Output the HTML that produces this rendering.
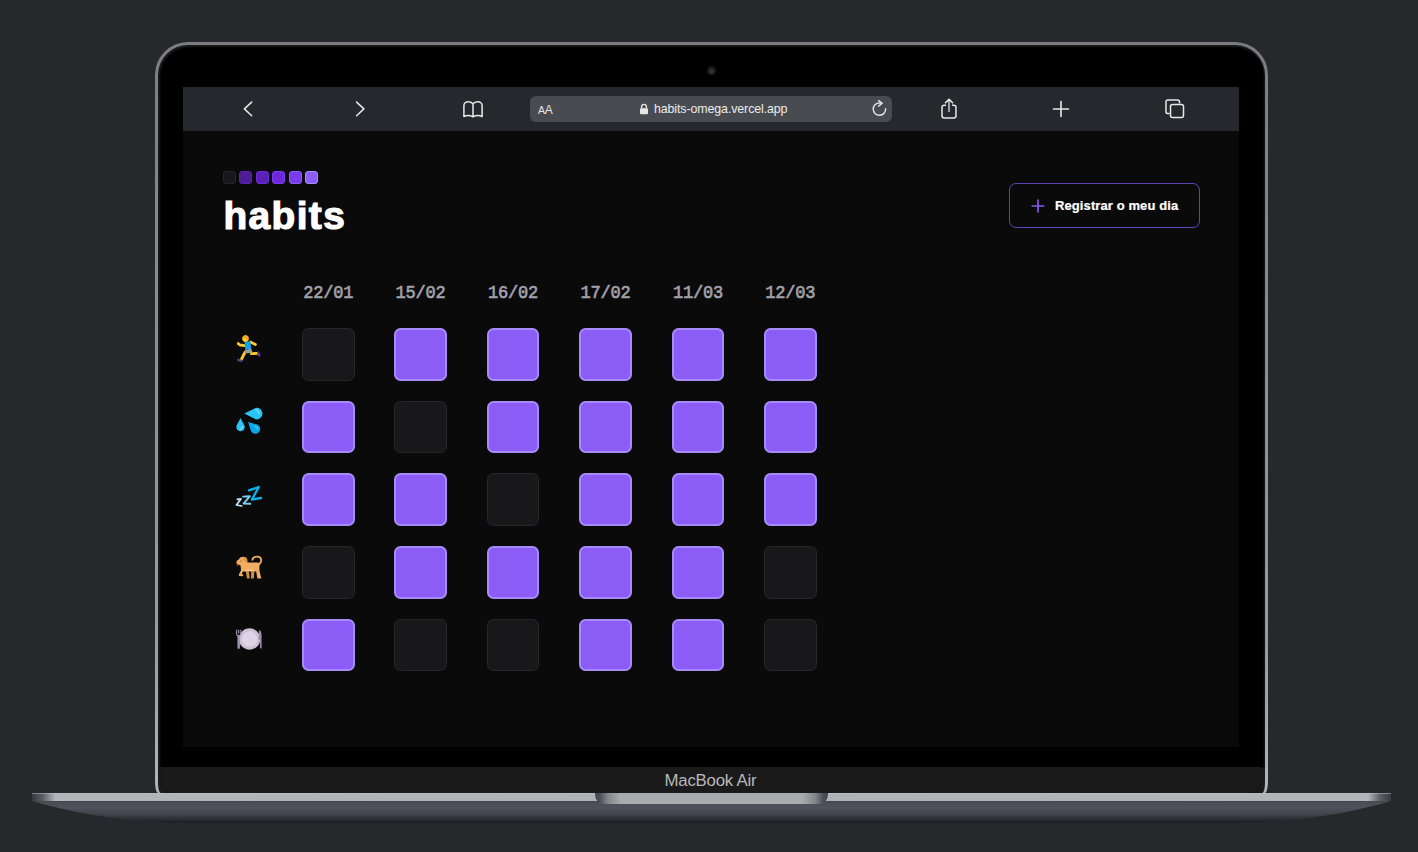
<!DOCTYPE html>
<html>
<head>
<meta charset="utf-8">
<style>
*{margin:0;padding:0;box-sizing:border-box}
html,body{width:1418px;height:852px;overflow:hidden;background:#25292c;font-family:"Liberation Sans",sans-serif}
.abs{position:absolute}
#lid{position:absolute;left:155px;top:42px;width:1113px;height:751px;border-radius:33px 33px 3px 3px / 33px 33px 12px 12px;background:linear-gradient(180deg,#7c7d82 0,#8d8e93 300px,#9a9b9f 600px,#b4b5b9 751px);}
#lid2{position:absolute;left:158px;top:45px;width:1107px;height:748px;border-radius:30px 30px 2.5px 2.5px / 30px 30px 11px 11px;background:#1b1b1c;}
#lid3{position:absolute;left:160.5px;top:47.5px;width:1102px;height:719.5px;border-radius:28px 28px 0 0;background:#000;box-shadow:0 0 2px 1px #000}
#chin{position:absolute;left:161px;top:767px;width:1100px;height:26px;background:#1a1a1a;border-radius:0 0 12px 12px;box-shadow:0 1px 1px #111}
#cam{position:absolute;left:707px;top:65.8px;width:9px;height:9px;border-radius:50%;background:radial-gradient(circle at 50% 60%,#3a3b40 0,#1e1e22 45%,#0a0a0b 100%)}
#screen{position:absolute;left:183px;top:87px;width:1056px;height:660px;background:#0a0a0a;overflow:hidden}
#toolbar{position:absolute;left:0;top:0;width:1056px;height:44px;background:#25292d}
#url{position:absolute;left:347px;top:9px;width:362px;height:26px;border-radius:6px;background:#484b50}
.mac{position:absolute;left:1.5px;top:770.6px;width:1418px;text-align:center;color:#b8b8ba;font-size:16.8px;letter-spacing:-0.2px}
#base{position:absolute;left:32px;top:793px;width:1359px;height:30px;}
#bar{position:absolute;left:0;top:0;width:1359px;height:8px;background:linear-gradient(90deg,#3a3b40 0,#6e6f74 12px,#a8a9ad 32px,#b2b3b7 60px,#b0b1b5 1299px,#a8a9ad 1327px,#6e6f74 1347px,#3a3b40 1359px)}
#under{position:absolute;left:0;top:8px;width:1359px;height:22px;border-radius:0 0 170px 170px / 0 0 22px 22px;background:linear-gradient(180deg,#4a4b53 0,#52535b 5px,#484951 11px,#34353c 17px,#1c1d22 22px)}
#notch{position:absolute;left:563px;top:0;width:233px;height:11px;border-radius:0 0 10px 10px;background:linear-gradient(90deg,#45474f 0,#50525a 4px,#85868c 12px,#a9aaae 26px,#a9aaae 207px,#85868c 221px,#50525a 229px,#45474f 233px)}
.cell{position:absolute;width:52.5px;height:52.8px;border-radius:6.5px}
.on{background:#8b5cf6;border:2px solid #a78bfa}
.off{background:#18181b;border:1.5px solid #27272a}
.date{position:absolute;top:194.8px;width:92px;text-align:center;font-family:"Liberation Mono",monospace;font-weight:normal;font-size:17px;letter-spacing:-0.2px;color:#a1a1aa;-webkit-text-stroke:0.6px #a1a1aa;transform:scaleY(1.11);transform-origin:50% 0}
.emo{position:absolute}
</style>
</head>
<body>
<div id="lid"></div>
<div id="lid2"></div>
<div id="lid3"></div>
<div id="cam"></div>
<div id="screen">
  <div id="toolbar">
    <!-- back -->
    <svg class="abs" style="left:55px;top:12px" width="20" height="20" viewBox="0 0 20 20"><path d="M13.7 3.1 L6.4 9.9 L13.7 16.7" fill="none" stroke="#e8e8e8" stroke-width="1.5" stroke-linecap="round" stroke-linejoin="round"/></svg>
    <!-- forward -->
    <svg class="abs" style="left:167px;top:12px" width="20" height="20" viewBox="0 0 20 20"><path d="M6.6 3.1 L13.9 9.9 L6.6 16.7" fill="none" stroke="#e8e8e8" stroke-width="1.5" stroke-linecap="round" stroke-linejoin="round"/></svg>
    <!-- book -->
    <svg class="abs" style="left:277px;top:12px" width="26" height="22" viewBox="0 0 26 22"><path d="M13 5 C12 3.4 10.6 2.8 8.4 2.8 C5.6 2.8 3.9 4.2 3.9 6.4 V17.6 C6.6 16.2 10.2 16.4 13 17.8 C15.8 16.4 19.4 16.2 22.1 17.6 V6.4 C22.1 4.2 20.4 2.8 17.6 2.8 C15.4 2.8 14 3.4 13 5 Z M13 5 V17.8" fill="none" stroke="#e8e8e8" stroke-width="1.5" stroke-linejoin="round"/></svg>
    <div id="url">
      <div class="abs" style="left:8px;top:7px;color:#e6e6e6;font-size:12px;letter-spacing:-0.3px"><span style="font-size:10.5px">A</span>A</div>
      <svg class="abs" style="left:109px;top:7px" width="10" height="12" viewBox="0 0 10 12"><path d="M2.6 5.5 V3.8 A2.4 2.4 0 0 1 7.4 3.8 V5.5" fill="none" stroke="#e6e6e6" stroke-width="1.4"/><rect x="1" y="5.3" width="8" height="6" rx="1" fill="#e6e6e6"/></svg>
      <div class="abs" style="left:124px;top:5.5px;color:#ececec;font-size:12.4px;letter-spacing:-0.1px">habits-omega.vercel.app</div>
      <svg class="abs" style="left:340px;top:4px" width="18" height="18" viewBox="0 0 18 18"><path d="M15.6 8.6 A6.2 6.2 0 1 1 9.4 2.9 L11.6 3.2" fill="none" stroke="#e6e6e6" stroke-width="1.4" stroke-linecap="round"/><path d="M8.6 0.6 L12.2 3.3 L8.6 6.1" fill="none" stroke="#e6e6e6" stroke-width="1.4" stroke-linecap="round" stroke-linejoin="round"/></svg>
    </div>
    <!-- share -->
    <svg class="abs" style="left:754px;top:10px" width="24" height="24" viewBox="0 0 24 24"><path d="M9 8.3 H7.2 Q5 8.3 5 10.5 V18.8 Q5 21 7.2 21 H16.8 Q19 21 19 18.8 V10.5 Q19 8.3 16.8 8.3 H15" fill="none" stroke="#e8e8e8" stroke-width="1.5" stroke-linejoin="round"/><path d="M12 14.4 V3" fill="none" stroke="#c8c8c8" stroke-width="1.5" stroke-linecap="round"/><path d="M8.4 5.8 L12 2.4 L15.6 5.8" fill="none" stroke="#eeeeee" stroke-width="1.5" stroke-linecap="round" stroke-linejoin="round"/></svg>
    <!-- plus -->
    <svg class="abs" style="left:866px;top:10px" width="24" height="24" viewBox="0 0 24 24"><path d="M12 4.5 V19.5 M4.5 12 H19.5" fill="none" stroke="#e8e8e8" stroke-width="1.6" stroke-linecap="round"/></svg>
    <!-- tabs -->
    <svg class="abs" style="left:980px;top:10px" width="24" height="24" viewBox="0 0 24 24"><path d="M6.5 16.5 H4.8 A1.8 1.8 0 0 1 3 14.7 V4.8 A1.8 1.8 0 0 1 4.8 3 H14.7 A1.8 1.8 0 0 1 16.5 4.8 V6.5" fill="none" stroke="#e8e8e8" stroke-width="1.5"/><rect x="7.5" y="7.5" width="13" height="13" rx="2" fill="none" stroke="#e8e8e8" stroke-width="1.5"/></svg>
  </div>

<!-- logo -->
<div class="abs" style="left:40px;top:84px;width:13.4px;height:13.2px;border-radius:3px;background:#18181b;border:1px solid #27272a"></div>
<div class="abs" style="left:56px;top:84px;width:13.4px;height:13.2px;border-radius:3px;background:#4c1d95;border:1px solid #5b21b6"></div>
<div class="abs" style="left:72.5px;top:84px;width:13.4px;height:13.2px;border-radius:3px;background:#5b21b6;border:1px solid #6d28d9"></div>
<div class="abs" style="left:89px;top:84px;width:13.4px;height:13.2px;border-radius:3px;background:#6d28d9;border:1px solid #7c3aed"></div>
<div class="abs" style="left:105.5px;top:84px;width:13.4px;height:13.2px;border-radius:3px;background:#7c3aed;border:1px solid #8b5cf6"></div>
<div class="abs" style="left:122px;top:84px;width:13.4px;height:13.2px;border-radius:3px;background:#8b5cf6;border:1px solid #a78bfa"></div>
<div class="abs" id="title" style="left:40.5px;top:107.4px;color:#fff;font-weight:bold;font-size:38.8px;letter-spacing:1.4px;-webkit-text-stroke:1.2px #fff">habits</div>
<!-- button -->
<div class="abs" id="btn" style="left:826px;top:96px;width:191px;height:45px;border:1px solid #6342b8;border-radius:7px"></div>
<svg class="abs" style="left:848px;top:111.5px" width="14" height="14" viewBox="0 0 14 14"><path d="M7 0.6 V13.4 M0.6 7 H13.4" stroke="#8658ee" stroke-width="1.7"/></svg>
<div class="abs" id="btntxt" style="left:872px;top:111px;color:#fff;font-weight:bold;font-size:13px;letter-spacing:0.1px;-webkit-text-stroke:0.2px #fff">Registrar o meu dia</div>
<div class="date" style="left:99.2px">22/01</div>
<div class="date" style="left:191.6px">15/02</div>
<div class="date" style="left:284.1px">16/02</div>
<div class="date" style="left:376.5px">17/02</div>
<div class="date" style="left:468.9px">11/03</div>
<div class="date" style="left:561.2px">12/03</div>
<div class="cell off" style="left:119.0px;top:241.1px"></div>
<div class="cell on" style="left:211.4px;top:241.1px"></div>
<div class="cell on" style="left:303.8px;top:241.1px"></div>
<div class="cell on" style="left:396.2px;top:241.1px"></div>
<div class="cell on" style="left:488.6px;top:241.1px"></div>
<div class="cell on" style="left:581.0px;top:241.1px"></div>
<div class="cell on" style="left:119.0px;top:313.7px"></div>
<div class="cell off" style="left:211.4px;top:313.7px"></div>
<div class="cell on" style="left:303.8px;top:313.7px"></div>
<div class="cell on" style="left:396.2px;top:313.7px"></div>
<div class="cell on" style="left:488.6px;top:313.7px"></div>
<div class="cell on" style="left:581.0px;top:313.7px"></div>
<div class="cell on" style="left:119.0px;top:386.3px"></div>
<div class="cell on" style="left:211.4px;top:386.3px"></div>
<div class="cell off" style="left:303.8px;top:386.3px"></div>
<div class="cell on" style="left:396.2px;top:386.3px"></div>
<div class="cell on" style="left:488.6px;top:386.3px"></div>
<div class="cell on" style="left:581.0px;top:386.3px"></div>
<div class="cell off" style="left:119.0px;top:458.9px"></div>
<div class="cell on" style="left:211.4px;top:458.9px"></div>
<div class="cell on" style="left:303.8px;top:458.9px"></div>
<div class="cell on" style="left:396.2px;top:458.9px"></div>
<div class="cell on" style="left:488.6px;top:458.9px"></div>
<div class="cell off" style="left:581.0px;top:458.9px"></div>
<div class="cell on" style="left:119.0px;top:531.5px"></div>
<div class="cell off" style="left:211.4px;top:531.5px"></div>
<div class="cell off" style="left:303.8px;top:531.5px"></div>
<div class="cell on" style="left:396.2px;top:531.5px"></div>
<div class="cell on" style="left:488.6px;top:531.5px"></div>
<div class="cell off" style="left:581.0px;top:531.5px"></div>
<svg class="emo" style="left:47px;top:243px" width="38" height="38" viewBox="0 0 38 38">
 <g stroke-linecap="round" stroke-linejoin="round" fill="none">
  <path d="M8.2 13.6 L10 15 L14.8 15.6" stroke="#fdc92a" stroke-width="2.8"/>
  <path d="M20.4 12 L25.4 14.6" stroke="#fdc92a" stroke-width="2.8"/>
  <path d="M14.8 22.6 L11.4 29.4" stroke="#fdc92a" stroke-width="2.9"/>
  <path d="M21.4 23.6 L27.2 23.4" stroke="#fdc92a" stroke-width="2.9"/>
  <path d="M8.2 29.8 L11.2 30.8" stroke="#5b3b8c" stroke-width="2.4"/>
  <path d="M28.2 22.6 L29.2 25.4" stroke="#5b3b8c" stroke-width="2.4"/>
 </g>
 <path d="M14.6 12 L20.4 11.2 L21.2 18.8 L15.2 19.8 Z" fill="#0aa6ea"/>
 <path d="M14.6 20 L21.2 18.6 L22.6 22.8 L14.8 23.6 Z" fill="#9b9b9b"/>
 <path d="M12.2 8.8 C12.2 6 14 5.4 15.6 5.4 C17.8 5.4 18.8 6.8 18.6 9 C18.4 11 17.4 12 15.4 12 C13.4 12 12.2 10.8 12.2 8.8 Z" fill="#fdc92a"/>
 <path d="M12.4 7.6 C12.8 5.4 14.8 5 16.2 5.2 C18.2 5.4 18.8 7 18.6 8.6 L18.2 10.6 C17.6 9.6 16.8 9 16 9 L15.6 8 C14.6 8.2 13.4 8.4 12.4 7.6 Z" fill="#f5a623"/>
</svg>
<svg class="emo" style="left:47px;top:315px" width="38" height="38" viewBox="0 0 38 38">
 <path d="M14.3 11.6 L25.6 5.9 A5.8 5.8 0 1 1 25.6 17.3 Z" fill="#29c5f6"/>
 <path d="M10.5 16 L14.5 23.8 A4.2 4.2 0 1 1 6.5 23.8 Z" fill="#29c5f6"/>
 <path d="M18.1 20.1 L27.8 22.7 A4.9 4.9 0 1 1 21.2 29.6 Z" fill="#0aa8e8"/>
 <path d="M25.5 8 A3.6 3.6 0 0 1 29 12" stroke="#b8ecfc" stroke-width="0.9" fill="none"/>
 <path d="M12.6 24.2 A2.6 2.6 0 0 1 10.2 26.8" stroke="#b8ecfc" stroke-width="0.8" fill="none"/>
 <path d="M24.6 24.4 A3.2 3.2 0 0 1 27.6 27.2" stroke="#9fdcf7" stroke-width="0.8" fill="none"/>
</svg>
<svg class="emo" style="left:47px;top:390px" width="38" height="38" viewBox="0 0 38 38">
 <g fill="none" stroke-linecap="round" stroke-linejoin="round">
  <path d="M18.9 13.4 L28.8 10 L21.9 22.5 L31 21" stroke="#0ab4f0" stroke-width="2.3"/>
  <path d="M13.1 19.6 L19.8 19.3 L13.5 26.6 L20.4 26.7" stroke="#7ccdf5" stroke-width="1.9"/>
  <path d="M7.3 22.3 L11 21.9 L6.4 28 L11.7 29" stroke="#c3e6f8" stroke-width="1.7"/>
 </g>
</svg>
<svg class="emo" style="left:47px;top:461px" width="38" height="38" viewBox="0 0 38 38">
 <path d="M22.4 11.8 C23.2 7.8 30.6 7.2 31.2 11.8 C31.4 14.2 30.2 15.8 28.8 16.8" fill="none" stroke="#f0ae62" stroke-width="1.8" stroke-linecap="round"/>
 <path d="M6.4 14.2 C6.6 12.6 8 11.6 9 11.2 C9.8 9.4 11.8 8.6 14 8.8 C16.4 9 17.4 10.6 17.4 13 L17.4 14.6 L27.6 14.6 C28.8 14.6 29.4 15.6 29.4 17 L29.4 22.6 L31.3 30.6 L27.4 30.6 L26.2 23.4 L13.4 23.4 L11.6 25.2 L13.4 27.2 L12.6 28.2 L9.4 28 C8.6 27.6 8.6 26.6 9.2 25.8 L11 22.2 L10.6 17.4 C9.4 17 8.2 16.6 7.4 16.2 C6.8 15.8 6.4 15 6.4 14.2 Z" fill="#f0ae62"/>
 <path d="M15.6 22.8 L18.8 22.8 L19.8 30.6 L17 30.6 Z M21.2 22.8 L24.4 22.8 L23.8 30.6 L21 30.6 Z" fill="#d38e3b"/>
 <path d="M13.2 9.2 C15.6 9 17.2 10.4 17.2 12.6 L17 14 C15.6 13.8 14.2 12.6 13.6 11.4 Z" fill="#d8943f"/>
 <circle cx="11" cy="13.1" r="0.6" fill="#6b4a2a"/>
 <rect x="15.2" y="21.9" width="8.6" height="0.9" fill="#fbe2b8"/>
 <path d="M6.9 15.6 L7.5 17.8" stroke="#e0321e" stroke-width="1" stroke-linecap="round"/>
</svg>
<svg class="emo" style="left:47px;top:533px" width="38" height="38" viewBox="0 0 38 38">
 <circle cx="19.6" cy="19" r="10.7" fill="#cbc1d5"/>
 <circle cx="19.6" cy="19" r="7.7" fill="#ddd4e7"/>
 <path d="M6.6 9.8 V14 Q6.6 15.5 8 15.8 V28 Q8.6 28.8 9.3 28 V15.8 Q10.8 15.5 10.8 14 V9.8 M8.7 9.8 V13.5" fill="none" stroke="#a596b3" stroke-width="1.1" stroke-linejoin="round"/>
 <path d="M8 15 H9.3 V28 H8 Z" fill="#a596b3"/>
 <path d="M29.2 9.9 C31.5 10.5 31.8 14 31.6 18 L31.6 28 Q30.8 29 30 28 L30 20 L28.6 19.5 Z" fill="#9b8ea9"/>
</svg>
</div>
<div id="chin"></div>
<div class="mac">MacBook Air</div>
<svg id="basesvg" class="abs" style="left:32px;top:793px" width="1359" height="31" viewBox="0 0 1359 31">
 <defs>
  <linearGradient id="ug" x1="0" y1="0" x2="0" y2="1">
   <stop offset="0" stop-color="#45464d"/>
   <stop offset="0.08" stop-color="#4c4d55"/>
   <stop offset="0.3" stop-color="#50515a"/>
   <stop offset="0.6" stop-color="#42434b"/>
   <stop offset="0.85" stop-color="#2b2c32"/>
   <stop offset="1" stop-color="#1d1e22"/>
  </linearGradient>
  <linearGradient id="bg1" x1="0" y1="0" x2="1" y2="0">
   <stop offset="0" stop-color="#38393f"/>
   <stop offset="0.008" stop-color="#5e5f65"/>
   <stop offset="0.017" stop-color="#b4b5b9"/>
   <stop offset="0.5" stop-color="#b0b1b5"/>
   <stop offset="0.983" stop-color="#b4b5b9"/>
   <stop offset="0.992" stop-color="#5e5f65"/>
   <stop offset="1" stop-color="#38393f"/>
  </linearGradient>
  <linearGradient id="ng" x1="0" y1="0" x2="1" y2="0">
   <stop offset="0" stop-color="#45474f"/>
   <stop offset="0.02" stop-color="#4d4f57"/>
   <stop offset="0.055" stop-color="#84858b"/>
   <stop offset="0.11" stop-color="#a9aaae"/>
   <stop offset="0.89" stop-color="#a9aaae"/>
   <stop offset="0.945" stop-color="#84858b"/>
   <stop offset="0.98" stop-color="#4d4f57"/>
   <stop offset="1" stop-color="#45474f"/>
  </linearGradient>
 </defs>
 <path d="M0 8 H1359 C1329 17 1269 30 1209 30 H150 C90 30 30 17 0 8 Z" fill="url(#ug)"/>
 <rect x="0" y="0" width="1359" height="8" fill="url(#bg1)"/>
 <rect x="0" y="0" width="1359" height="1" fill="#c0c1c5" opacity="0.5"/>
 <path d="M563 0 H796 V1 Q796 11 786 11 H573 Q563 11 563 1 Z" fill="url(#ng)"/>
</svg>
</body>
</html>
